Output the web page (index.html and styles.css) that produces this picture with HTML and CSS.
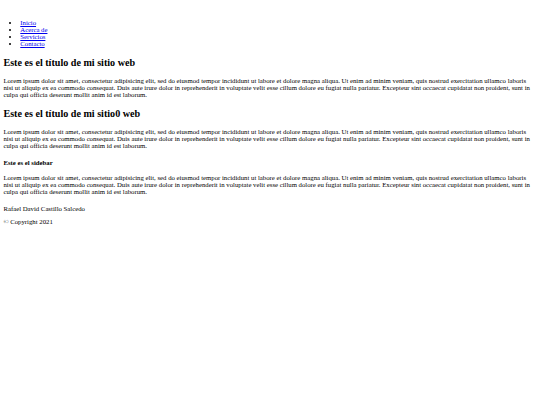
FILE: index.html
```html
<!DOCTYPE html>
<html lang="es">
<head>
<meta charset="utf-8">
<title>Mi sitio web</title>
<link rel="stylesheet" href="styles.css">
</head>
<body>
<header class="site-header">
  <nav class="main-nav">
    <ul>
      <li><a href="#">Inicio</a></li>
      <li><a href="#">Acerca de</a></li>
      <li><a href="#">Servicios</a></li>
      <li><a href="#">Contacto</a></li>
    </ul>
  </nav>
</header>
<main>
  <section>
    <h2>Este es el título de mi sitio web</h2>
    <p>Lorem ipsum dolor sit amet, consectetur adipisicing elit, sed do eiusmod tempor incididunt ut labore et dolore magna aliqua. Ut enim ad minim veniam, quis nostrud exercitation ullamco laboris nisi ut aliquip ex ea commodo consequat. Duis aute irure dolor in reprehenderit in voluptate velit esse cillum dolore eu fugiat nulla pariatur. Excepteur sint occaecat cupidatat non proident, sunt in culpa qui officia deserunt mollit anim id est laborum.</p>
  </section>
  <section>
    <h2>Este es el título de mi sitio0 web</h2>
    <p>Lorem ipsum dolor sit amet, consectetur adipisicing elit, sed do eiusmod tempor incididunt ut labore et dolore magna aliqua. Ut enim ad minim veniam, quis nostrud exercitation ullamco laboris nisi ut aliquip ex ea commodo consequat. Duis aute irure dolor in reprehenderit in voluptate velit esse cillum dolore eu fugiat nulla pariatur. Excepteur sint occaecat cupidatat non proident, sunt in culpa qui officia deserunt mollit anim id est laborum.</p>
  </section>
</main>
<aside>
  <h4>Este es el sidebar</h4>
  <p>Lorem ipsum dolor sit amet, consectetur adipisicing elit, sed do eiusmod tempor incididunt ut labore et dolore magna aliqua. Ut enim ad minim veniam, quis nostrud exercitation ullamco laboris nisi ut aliquip ex ea commodo consequat. Duis aute irure dolor in reprehenderit in voluptate velit esse cillum dolore eu fugiat nulla pariatur. Excepteur sint occaecat cupidatat non proident, sunt in culpa qui officia deserunt mollit anim id est laborum.</p>
</aside>
<footer class="site-footer">
  <p class="author">Rafael David Castillo Salcedo</p>
  <p>&copy; Copyright 2021</p>
</footer>
</body>
</html>
```
FILE: styles.css
```css
body {
  margin: 3.4px;
  font-family: "Liberation Serif", "Times New Roman", serif;
  font-size: 6.75px;
  color: #000;
  background: #fff;
}
.site-header {
  padding-top: 9px;
}
.main-nav ul {
  margin: 6.75px 0;
  padding-left: 16.9px;
}
.main-nav a {
  color: #0000ee;
}
h2 {
  font-size: 10.125px;
  margin: 9.7px 0 9.4px;
}
h4 {
  font-size: 6.75px;
  margin: 9.8px 0 8px;
}
p {
  margin: 6.75px 0;
}
.site-footer .author {
  margin-top: 9.5px;
}
```
